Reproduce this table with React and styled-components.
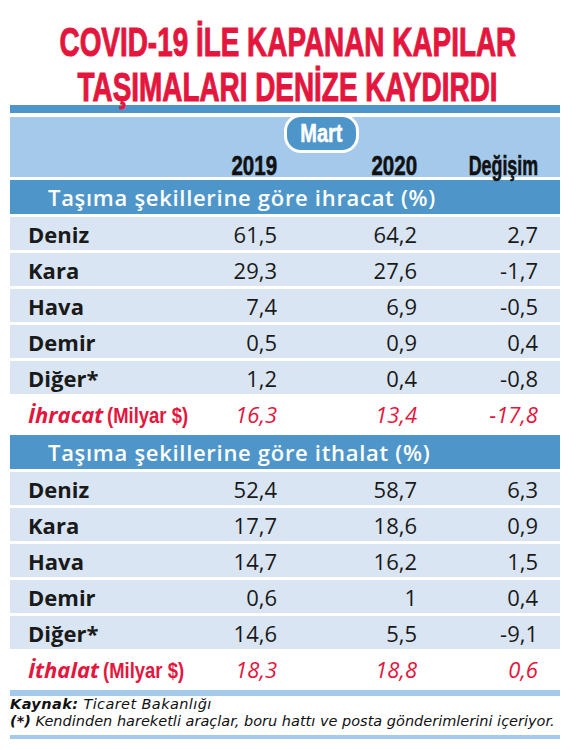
import React from "react";
import styled, { createGlobalStyle } from "styled-components";

const GlobalStyle = createGlobalStyle`
  html, body {
    margin: 0;
    padding: 0;
    background: #ffffff;
  }
  body {
    font-family: "Open Sans", "Liberation Sans", sans-serif;
    color: #1a1a1a;
  }
`;

const DARK = "#4e95c9";
const LIGHT = "#a4c9ea";
const ROW = "#d9e5f2";
const RED = "#e4163d";
const CONDENSED = `"Liberation Sans", Arial, sans-serif`;

const exportRows = [
  ["Deniz", "61,5", "64,2", "2,7"],
  ["Kara", "29,3", "27,6", "-1,7"],
  ["Hava", "7,4", "6,9", "-0,5"],
  ["Demir", "0,5", "0,9", "0,4"],
  ["Diğer*", "1,2", "0,4", "-0,8"],
];

const importRows = [
  ["Deniz", "52,4", "58,7", "6,3"],
  ["Kara", "17,7", "18,6", "0,9"],
  ["Hava", "14,7", "16,2", "1,5"],
  ["Demir", "0,6", "1", "0,4"],
  ["Diğer*", "14,6", "5,5", "-9,1"],
];

const Table = ({ title, rows, total, totalValues }) => (
  <>
    <SectionBar>{title}</SectionBar>
    {rows.map((r) => (
      <Row key={r[0]}>
        <Label>{r[0]}</Label>
        <Num>{r[1]}</Num>
        <Num>{r[2]}</Num>
        <Num>{r[3]}</Num>
      </Row>
    ))}
    <Row $total>
      <Label $red>
        {total} <Unit>(Milyar $)</Unit>
      </Label>
      {totalValues.map((v, i) => (
        <Num key={i} $red>
          {v}
        </Num>
      ))}
    </Row>
  </>
);

const App = () => {
  return (
    <>
      <GlobalStyle />
      <Page>
        <Title>
          <TitleLine>COVID-19 İLE KAPANAN KAPILAR</TitleLine>
          <TitleLine>TAŞIMALARI DENİZE KAYDIRDI</TitleLine>
        </Title>
        <TopBar />
        <Header>
          <Pill>
            <span>Mart</span>
          </Pill>
          <HeadCell $col={2} $scale={0.76}>
            2019
          </HeadCell>
          <HeadCell $col={3} $scale={0.76}>
            2020
          </HeadCell>
          <HeadCell $col={4} $scale={0.66}>
            Değişim
          </HeadCell>
        </Header>
        <Table
          title="Taşıma şekillerine göre ihracat (%)"
          rows={exportRows}
          total="İhracat"
          totalValues={["16,3", "13,4", "-17,8"]}
        />
        <Table
          title="Taşıma şekillerine göre ithalat (%)"
          rows={importRows}
          total="İthalat"
          totalValues={["18,3", "18,8", "0,6"]}
        />
        <FootBar $h={6} />
        <Notes>
          <p>
            <b>Kaynak:</b> Ticaret Bakanlığı
          </p>
          <p>
            <b>(*)</b> Kendinden hareketli araçlar, boru hattı ve posta
            gönderimlerini içeriyor.
          </p>
        </Notes>
        <FootBar $h={4} />
      </Page>
    </>
  );
};

const Page = styled.div`
  width: 550px;
  padding: 0 16px 0 10px;
`;

const Title = styled.h1`
  margin: 0 0 0 -10px;
  padding-top: 20px;
  height: 85px;
  width: 576px;
  display: flex;
  flex-direction: column;
  align-items: center;
  font-family: ${CONDENSED};
  font-weight: 700;
  font-size: 37px;
  line-height: 45px;
  color: ${RED};
  -webkit-text-stroke: 0.9px ${RED};
`;

const TitleLine = styled.span`
  display: inline-block;
  flex: none;
  white-space: nowrap;
  transform: scale(0.754, 1.11);
  transform-origin: center;
`;

const TopBar = styled.div`
  height: 8px;
  background: ${DARK};
  margin-bottom: 4px;
`;

const Header = styled.div`
  height: 60px;
  background: ${LIGHT};
  display: grid;
  grid-template-columns: 169px 80px 140px 121px;
  grid-template-rows: 36px 1fr;
  padding: 0 18px;
  box-sizing: border-box;
  margin-bottom: 3px;
`;

const Pill = styled.div`
  grid-column: 3;
  grid-row: 1;
  justify-self: start;
  align-self: start;
  margin: -3px 0 0 7px;
  width: 69px;
  height: 33px;
  border: 3px solid #ffffff;
  border-radius: 17px;
  background: ${DARK};
  color: #ffffff;
  font-family: ${CONDENSED};
  font-weight: 700;
  font-size: 25px;
  line-height: 32px;
  text-align: center;
  -webkit-text-stroke: 0.5px #ffffff;
  span {
    display: inline-block;
    transform: scaleX(0.8);
  }
`;

const HeadCell = styled.div`
  grid-column: ${(p) => p.$col};
  grid-row: 2;
  justify-self: end;
  align-self: end;
  margin-bottom: 2px;
  font-family: ${CONDENSED};
  font-weight: 700;
  font-size: 27px;
  line-height: 26px;
  color: #111;
  -webkit-text-stroke: 0.6px #111;
  transform: scaleX(${(p) => p.$scale});
  transform-origin: right center;
`;

const SectionBar = styled.div`
  height: 34px;
  background: ${DARK};
  color: #ffffff;
  font-weight: 600;
  font-size: 22px;
  letter-spacing: 0.7px;
  line-height: 34px;
  padding-left: 38px;
  margin-bottom: 3px;
  white-space: nowrap;
`;

const Row = styled.div`
  display: grid;
  grid-template-columns: 169px 80px 140px 121px;
  align-items: center;
  height: ${(p) => (p.$total ? "34px" : "33px")};
  margin-bottom: ${(p) => (p.$total ? "4px" : "3px")};
  padding: 0 22px 0 18px;
  background: ${(p) => (p.$total ? "#ffffff" : ROW)};
  font-size: 22px;
`;

const Label = styled.div`
  font-weight: 700;
  white-space: nowrap;
  color: ${(p) => (p.$red ? RED : "#1a1a1a")};
  font-style: ${(p) => (p.$red ? "italic" : "normal")};
`;

const Unit = styled.span`
  display: inline-block;
  font-family: ${CONDENSED};
  font-style: normal;
  font-weight: 700;
  font-size: 22px;
  transform: scaleX(0.84);
  transform-origin: left center;
  margin-left: -2px;
`;

const Num = styled.div`
  text-align: right;
  color: ${(p) => (p.$red ? RED : "#1a1a1a")};
  font-style: ${(p) => (p.$red ? "italic" : "normal")};
`;

const FootBar = styled.div`
  height: ${(p) => p.$h}px;
  background: ${LIGHT};
`;

const Notes = styled.div`
  padding: 0 0 5px 0;
  font-family: "DejaVu Sans", "Liberation Sans", sans-serif;
  font-style: italic;
  font-size: 14.5px;
  line-height: 17px;
  color: #111;
  p {
    margin: 0;
    white-space: nowrap;
  }
  p:first-child {
    letter-spacing: 0.4px;
  }
  b {
    font-weight: 700;
  }
`;

export default App;
